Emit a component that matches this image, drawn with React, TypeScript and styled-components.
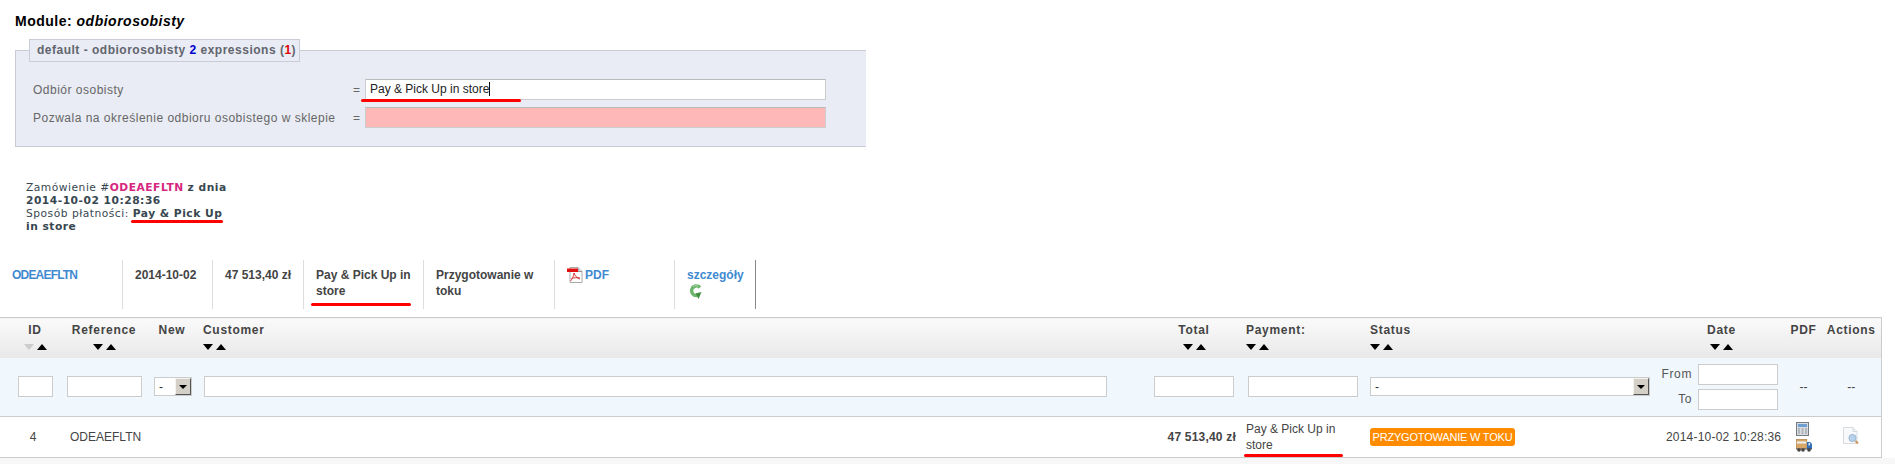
import React from "react";
import styled, { createGlobalStyle } from "styled-components";

const Global = createGlobalStyle`
  html, body { margin: 0; padding: 0; background: #fff; }
  body { font-family: "Liberation Sans", Arial, sans-serif; font-size: 12px; color: #333; }
`;

const Page = styled.div`
  width: 1895px;
  height: 464px;
  overflow: hidden;
  background: #fff;
`;

const Heading = styled.h2`
  margin: 0;
  padding: 13px 0 0 15px;
  height: 39px;
  box-sizing: border-box;
  font-size: 14px;
  letter-spacing: 0.5px;
  line-height: 16px;
  font-weight: bold;
  color: #000;
  em { font-style: italic; }
`;

const Fieldset = styled.fieldset`
  margin: 0 0 0 15px;
  padding: 17px 39px 0 17px;
  width: 851px;
  height: 108px;
  box-sizing: border-box;
  background: #e9ecf4;
  border: 1px solid #c9ccd6;
  border-right: none;
`;

const Legend = styled.legend`
  margin-left: -4px;
  padding: 0 0 0 7px;
  height: 23px;
  box-sizing: border-box;
  width: 271px;
  line-height: 21px;
  background: #e9ecf4;
  border: 1px solid #c9ccd6;
  color: #62656e;
  font-size: 12px;
  font-weight: bold;
  white-space: nowrap;
  letter-spacing: 0.5px;
`;
const Blue = styled.span`color: #0000cc;`;
const Red = styled.span`color: #e00000;`;

const TransRow = styled.div`
  display: flex;
  align-items: center;
  margin-bottom: 7px;
`;
const TransLabel = styled.label`
  width: 320px;
  color: #666;
  font-size: 12px;
  letter-spacing: 0.5px;
  white-space: nowrap;
`;
const Eq = styled.span`
  width: 12px;
  color: #666;
  font-size: 12px;
`;
const InputWrap = styled.span`
  position: relative;
  display: block;
`;
const TransInput = styled.div<{ $missing?: boolean }>`
  width: 461px;
  height: 21px;
  box-sizing: border-box;
  border: 1px solid #ccc;
  border-top-color: #bbb;
  background: ${(p) => (p.$missing ? "#ffb8b8" : "#fff")};
  padding: 0 4px;
  font-size: 12px;
  line-height: 19px;
  color: #222;
`;
const Caret = styled.span`
  display: inline-block;
  width: 1px;
  height: 14px;
  background: #111;
  vertical-align: -3px;
`;

const Underline = styled.span<{ $w: number; $l: number; $b: number }>`
  position: absolute;
  left: ${(p) => p.$l}px;
  bottom: ${(p) => p.$b}px;
  width: ${(p) => p.$w}px;
  height: 3px;
  border-radius: 2px;
  background: #f00;
`;

const Summary = styled.div`
  margin: 34px 0 0 26px;
  width: 205px;
  font-family: "DejaVu Sans", Verdana, sans-serif;
  font-size: 10.7px;
  letter-spacing: 0.5px;
  line-height: 13px;
  color: #374750;
  b { font-weight: bold; }
`;
const Pink = styled.b`color: #d6267f;`;
const Marked = styled.span`position: relative;`;

const OrderStrip = styled.div`
  display: flex;
  margin: 27px 0 0 0;
  height: 49px;
  font-size: 12px;
  line-height: 16px;
  font-weight: bold;
  color: #444;
`;
const OrderCell = styled.div<{ $w: number; $pad?: number; $last?: boolean }>`
  position: relative;
  width: ${(p) => p.$w}px;
  box-sizing: border-box;
  padding: 7px 8px 0 ${(p) => p.$pad ?? 12}px;
  border-right: 1px solid ${(p) => (p.$last ? "#888" : "#ddd")};
`;
const OrderLink = styled.span<{ $tight?: boolean }>`
  color: #3f8ad0;
  letter-spacing: ${(p) => (p.$tight ? "-0.8px" : "0")};
`;
const Nowrap = styled.span`white-space: nowrap;`;
const Inline = styled.div`display: flex; align-items: flex-start; gap: 2px;`;
const BlockIcon = styled.div`display: block; margin: 1px 0 0 2px; height: 16px;`;

const Table = styled.table`
  display: table;
  margin-top: 8px;
  width: 1881px;
  table-layout: fixed;
  border-collapse: collapse;
  border-top: 1px solid #ccc;
  border-right: 1px solid #ccc;
`;
const HeadCell = styled.th<{ $align?: string; $pad?: number; $padR?: number }>`
  height: 40px;
  padding: 5px ${(p) => p.$padR ?? 0}px 0 ${(p) => p.$pad ?? 0}px;
  box-sizing: border-box;
  vertical-align: top;
  text-align: ${(p) => p.$align ?? "left"};
  background: linear-gradient(#fafafa, #e8e8e8);
  font-size: 12px;
  line-height: 14px;
  font-weight: bold;
  color: #444;
  letter-spacing: 0.7px;
  white-space: nowrap;
`;
const Sorters = styled.div<{ $align?: string }>`
  display: flex;
  gap: 3px;
  margin-top: 7px;
  height: 6px;
  justify-content: ${(p) => p.$align ?? "flex-start"};
`;
const Arrow = styled.span<{ $up?: boolean; $muted?: boolean }>`
  width: 0;
  height: 0;
  border-left: 5px solid transparent;
  border-right: 5px solid transparent;
  ${(p) =>
    p.$up
      ? `border-bottom: 6px solid ${p.$muted ? "#ccc" : "#000"};`
      : `border-top: 6px solid ${p.$muted ? "#ccc" : "#000"};`}
`;
const FilterRow = styled.tr`
  height: 59px;
  background: #f0f7fd;
  border-bottom: 1px solid #ccc;
`;
const FilterCell = styled.td<{ $align?: string; $pad?: number }>`
  padding: 0 0 0 ${(p) => p.$pad ?? 0}px;
  text-align: ${(p) => p.$align ?? "left"};
  color: #444;
`;
const TextField = styled.div<{ $w: number }>`
  width: ${(p) => p.$w}px;
  height: 21px;
  box-sizing: border-box;
  background: #fff;
  border: 1px solid #ccc;
`;
const SelectBox = styled.div<{ $w: number }>`
  display: flex;
  align-items: center;
  justify-content: space-between;
  width: ${(p) => p.$w}px;
  height: 19px;
  box-sizing: border-box;
  background: #fff;
  border: 1px solid #ccc;
  padding-left: 4px;
  font-size: 12px;
  color: #333;
`;
const SelectButton = styled.span`
  position: relative;
  width: 16px;
  height: 17px;
  box-sizing: border-box;
  background: #d4d0c8;
  border: 1px solid;
  border-color: #f5f3ee #555 #555 #f5f3ee;
  display: flex;
  align-items: center;
  justify-content: center;
  &::after {
    content: "";
    border-left: 4px solid transparent;
    border-right: 4px solid transparent;
    border-top: 4px solid #000;
  }
`;
const DateGrid = styled.div`
  display: grid;
  grid-template-columns: 34px 80px;
  column-gap: 6px;
  row-gap: 4px;
  align-items: center;
  justify-content: start;
  color: #555;
  text-align: right;
  letter-spacing: 0.6px;
`;
const DataRow = styled.tr`
  height: 41px;
  background: #fff;
  border-bottom: 1px solid #ccc;
`;
const DataCell = styled.td<{ $align?: string; $pad?: number; $padR?: number; $bold?: boolean; $spread?: number }>`
  position: relative;
  padding: 0 ${(p) => p.$padR ?? 0}px 0 ${(p) => p.$pad ?? 0}px;
  text-align: ${(p) => p.$align ?? "left"};
  font-size: 12px;
  line-height: 16px;
  color: #444;
  font-weight: ${(p) => (p.$bold ? "bold" : "normal")};
  letter-spacing: ${(p) => p.$spread ?? 0}px;
`;
const Badge = styled.span`
  display: inline-block;
  width: 145px;
  height: 18px;
  line-height: 18px;
  box-sizing: border-box;
  border-radius: 3px;
  background: #ff8c00;
  color: #fff;
  font-size: 11px;
  letter-spacing: -0.2px;
  text-align: center;
  white-space: nowrap;
`;
const DateText = styled.span`white-space: nowrap; letter-spacing: 0.2px;`;
const IconStack = styled.div`
  display: flex;
  flex-direction: column;
  gap: 3px;
  padding-left: 11px;
`;
const Footer = styled.div`
  height: 6px;
  background: #f7f7f7;
`;

const PdfIcon = () => (
  <svg width="16" height="16" viewBox="0 0 16 16">
    <path d="M3 .5h8l4 4V15.500H3z" fill="#fff" stroke="#aaa" />
    <path d="M11 .5v4h4" fill="#ddd" stroke="#999" />
    <rect x="0" y="1.500" width="11" height="3.500" fill="#e01010" />
    <path d="M7 6c0 3-2 6-3.500 8M7 6c1 3 3 5 6 6M4.500 11.500c3-1 5-1 8.500-.5" fill="none" stroke="#d83030" strokeWidth="1" />
  </svg>
);
const RefreshIcon = () => (
  <svg width="13" height="16" viewBox="0 0 13 16">
    <path d="M11 3.500A4.800 4.800 0 1 0 8 11.500" fill="none" stroke="#6db56d" strokeWidth="3.400" />
    <path d="M6.500 9.500L12.500 8 9.500 15z" fill="#3f8f3f" />
    <path d="M4 2.500A5 5 0 0 1 9 2" fill="none" stroke="#a9d8a9" strokeWidth="1" />
  </svg>
);
const CalcIcon = () => (
  <svg width="13" height="14" viewBox="0 0 13 14">
    <rect x="0.500" y="0.500" width="12" height="13" fill="#d8dce0" stroke="#737c85" />
    <rect x="2" y="2" width="9" height="3" fill="#6f9fd0" />
    <path d="M2 7h2M5.500 7h2M9 7h2M2 9h2M5.500 9h2M9 9h2M2 11h2M5.500 11h2M9 11h2" stroke="#8a8f94" strokeWidth="1.200" />
  </svg>
);
const TruckIcon = () => (
  <svg width="16" height="13" viewBox="0 0 16 13">
    <rect x="0.300" y="0.300" width="10.500" height="9.200" fill="#d9a868" stroke="#a87a40" strokeWidth="0.600" />
    <rect x="0.800" y="2.500" width="9.500" height="2" fill="#eef2f6" />
    <path d="M11 3h3l2 2v5h-5z" fill="#2f6db8" />
    <rect x="12.500" y="4" width="1.600" height="2.500" fill="#dbe9f7" />
    <rect x="0" y="9.500" width="16" height="1" fill="#555" />
    <circle cx="3" cy="11" r="1.800" fill="#444" />
    <circle cx="7" cy="11" r="1.800" fill="#444" />
    <circle cx="13" cy="11" r="1.800" fill="#444" />
  </svg>
);
const DocSearchIcon = () => (
  <svg width="16" height="17" viewBox="0 0 16 17">
    <path d="M.5.500h9.500l4 4v12H.5z" fill="#f8f9fa" stroke="#d8dbde" />
    <path d="M10 .500v4h4" fill="#eceef0" stroke="#d8dbde" />
    <circle cx="9.500" cy="11" r="3.600" fill="#b9d2ec" stroke="#9ab6d2" />
    <path d="M12.500 14l2.500 2.500" stroke="#c9975a" strokeWidth="2" />
  </svg>
);

const Sort = ({ align, muted }: { align?: string; muted?: boolean }) => (
  <Sorters $align={align}>
    <Arrow $muted={muted} />
    <Arrow $up />
  </Sorters>
);

export default function App() {
  return (
    <Page>
      <Global />
      <Heading>
        Module: <em>odbiorosobisty</em>
      </Heading>
      <Fieldset>
        <Legend>
          default - odbiorosobisty <Blue>2</Blue> expressions (<Red>1</Red>)
        </Legend>
        <TransRow>
          <TransLabel>Odbiór osobisty</TransLabel>
          <Eq>=</Eq>
          <InputWrap>
            <TransInput>
              Pay &amp; Pick Up in store
              <Caret />
            </TransInput>
            <Underline $l={-4} $b={-2} $w={160} />
          </InputWrap>
        </TransRow>
        <TransRow>
          <TransLabel>Pozwala na określenie odbioru osobistego w sklepie</TransLabel>
          <Eq>=</Eq>
          <InputWrap>
            <TransInput $missing />
          </InputWrap>
        </TransRow>
      </Fieldset>

      <Summary>
        Zamówienie #<Pink>ODEAEFLTN</Pink> <b>z dnia 2014-10-02 10:28:36</b>
        <br />
        Sposób płatności:{" "}
        <Marked>
          <b>Pay &amp; Pick Up</b>
          <Underline $l={-2} $b={-3} $w={92} />
        </Marked>{" "}
        <b>in store</b>
      </Summary>

      <OrderStrip>
        <OrderCell $w={123}>
          <OrderLink $tight>ODEAEFLTN</OrderLink>
        </OrderCell>
        <OrderCell $w={90}>
          <Nowrap>2014-10-02</Nowrap>
        </OrderCell>
        <OrderCell $w={91}>
          <Nowrap>47 513,40 zł</Nowrap>
        </OrderCell>
        <OrderCell $w={120}>
          Pay &amp; Pick Up in store
          <Underline $l={7} $b={3} $w={100} />
        </OrderCell>
        <OrderCell $w={131}>Przygotowanie w toku</OrderCell>
        <OrderCell $w={120} $pad={12}>
          <Inline>
            <PdfIcon />
            <OrderLink>PDF</OrderLink>
          </Inline>
        </OrderCell>
        <OrderCell $w={81} $last>
          <OrderLink>szczegóły</OrderLink>
          <BlockIcon>
            <RefreshIcon />
          </BlockIcon>
        </OrderCell>
      </OrderStrip>

      <Table>
        <colgroup>
          <col width="60" />
          <col width="90" />
          <col width="48" />
          <col width="950" />
          <col width="92" />
          <col width="124" />
          <col width="294" />
          <col width="127" />
          <col width="37" />
          <col width="59" />
        </colgroup>
        <thead>
          <tr>
            <HeadCell $align="center" $pad={10}>
              ID
              <Sort align="center" muted />
            </HeadCell>
            <HeadCell $align="center" $padR={2}>
              Reference
              <Sort align="center" />
            </HeadCell>
            <HeadCell $align="center" $padR={4}>New</HeadCell>
            <HeadCell $pad={5}>
              Customer
              <Sort />
            </HeadCell>
            <HeadCell $align="center">
              Total
              <Sort align="center" />
            </HeadCell>
            <HeadCell $pad={6}>
              Payment:
              <Sort />
            </HeadCell>
            <HeadCell $pad={6}>
              Status
              <Sort />
            </HeadCell>
            <HeadCell $align="center">
              Date
              <Sort align="center" />
            </HeadCell>
            <HeadCell $align="center">PDF</HeadCell>
            <HeadCell $align="center">Actions</HeadCell>
          </tr>
        </thead>
        <tbody>
          <FilterRow>
            <FilterCell $pad={18}>
              <TextField $w={35} />
            </FilterCell>
            <FilterCell $pad={7}>
              <TextField $w={75} />
            </FilterCell>
            <FilterCell $pad={4}>
              <SelectBox $w={38}>
                - <SelectButton />
              </SelectBox>
            </FilterCell>
            <FilterCell $pad={6}>
              <TextField $w={903} />
            </FilterCell>
            <FilterCell $pad={6}>
              <TextField $w={80} />
            </FilterCell>
            <FilterCell $pad={8}>
              <TextField $w={110} />
            </FilterCell>
            <FilterCell $pad={6}>
              <SelectBox $w={280}>
                - <SelectButton />
              </SelectBox>
            </FilterCell>
            <FilterCell>
              <DateGrid>
                <span>From</span>
                <TextField $w={80} />
                <span>To</span>
                <TextField $w={80} />
              </DateGrid>
            </FilterCell>
            <FilterCell $align="center">--</FilterCell>
            <FilterCell $align="center">--</FilterCell>
          </FilterRow>
          <DataRow>
            <DataCell $align="center" $pad={6}>4</DataCell>
            <DataCell $pad={10}>ODEAEFLTN</DataCell>
            <DataCell />
            <DataCell />
            <DataCell $align="right" $padR={4} $bold $spread={0.2}>47 513,40 zł</DataCell>
            <DataCell $pad={6}>
              Pay &amp; Pick Up in store
              <Underline $l={4} $b={0} $w={99} />
            </DataCell>
            <DataCell $pad={6}>
              <Badge>PRZYGOTOWANIE W TOKU</Badge>
            </DataCell>
            <DataCell $pad={8}>
              <DateText>2014-10-02 10:28:36</DateText>
            </DataCell>
            <DataCell>
              <IconStack>
                <CalcIcon />
                <TruckIcon />
              </IconStack>
            </DataCell>
            <DataCell $align="center">
              <DocSearchIcon />
            </DataCell>
          </DataRow>
        </tbody>
      </Table>
      <Footer />
    </Page>
  );
}
